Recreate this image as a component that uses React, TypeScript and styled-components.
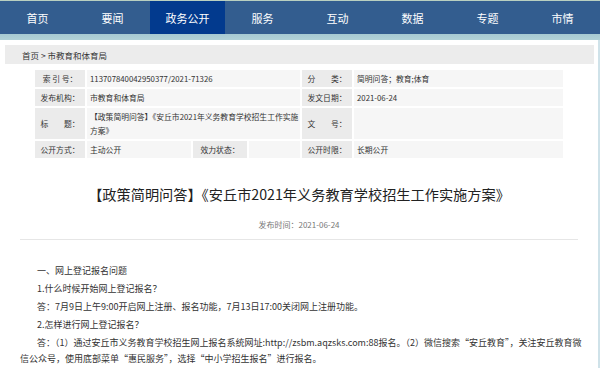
import styled, { createGlobalStyle } from 'styled-components';

const GlobalStyle = createGlobalStyle`
  html, body {
    margin: 0;
    padding: 0;
    background: #cfe2e9;
    font-family: "Noto Sans CJK SC", "Noto Sans", sans-serif;
    color: #333;
  }
`;

const Header = styled.div`
  width: 600px;
  height: 40px;
  background: linear-gradient(#b9cfc0 0, #b9cfc0 1px, transparent 1px, transparent 34px, #a6c9d2 34px, #b2d2d8 40px);
  display: flex;
  flex-direction: column;
`;

const NavBar = styled.nav`
  margin-top: 1px;
  height: 33px;
  display: flex;
  background: #335d8f;
`;

const NavItem = styled.a<{ $active?: boolean }>`
  width: 75px;
  display: flex;
  align-items: center;
  justify-content: center;
  font-size: 11px;
  color: #fff;
  text-decoration: none;
  background: ${({ $active }) => ($active ? '#023a8e' : 'transparent')};
`;

const Page = styled.div`
  width: 598px;
  background: #fff;
  padding: 5px 0 30px;
  box-sizing: border-box;
  min-height: 328px;
`;

const Crumb = styled.div`
  margin: 0 4px 0 5px;
  height: 19px;
  background: #ececec;
  display: flex;
  align-items: center;
  padding-left: 17px;
  font-size: 8.5px;
  color: #333;
`;

const MetaTable = styled.table`
  margin: 4px auto 0;
  border-collapse: separate;
  border-spacing: 2px;
  font-size: 7.8px;
  color: #333;
  table-layout: fixed;
  width: 532px;
`;

const Row = styled.tr<{ $tall?: boolean }>`
  height: ${({ $tall }) => ($tall ? '31px' : '17px')};
`;

const Label = styled.td`
  background: #ebebeb;
  text-align: center;
  padding: 0;
  white-space: nowrap;
`;

const Value = styled.td`
  background: #f6f6f6;
  padding: 1px 0 1px 3px;
  line-height: 14px;
`;

const Title = styled.h1`
  margin: 24px 0 0;
  text-align: center;
  font-size: 14.2px;
  line-height: 20px;
  font-weight: normal;
  color: #222;
`;

const PubTime = styled.div`
  margin-top: 15px;
  text-align: center;
  font-size: 8px;
  line-height: 12px;
  color: #777;
`;

const Divider = styled.hr`
  margin: 8px 20px 0;
  border: none;
  border-top: 1px solid #e6e6e6;
`;

const Body = styled.div`
  padding: 23px 16px 0 20px;
  font-size: 9px;
  line-height: 16px;
  color: #333;
`;

const Para = styled.p`
  margin: 0 0 2px;
  text-indent: 17px;
`;

const navs = ['首页', '要闻', '政务公开', '服务', '互动', '数据', '专题', '市情'];

export default function App() {
  return (
    <>
      <GlobalStyle />
      <Header>
        <NavBar>
          {navs.map((n) => (
            <NavItem key={n} $active={n === '政务公开'}>
              {n}
            </NavItem>
          ))}
        </NavBar>
      </Header>
      <Page>
        <Crumb>首页 &gt; 市教育和体育局</Crumb>
        <MetaTable>
          <colgroup>
            <col style={{ width: 50 }} />
            <col style={{ width: 104 }} />
            <col style={{ width: 54 }} />
            <col style={{ width: 51 }} />
            <col style={{ width: 50 }} />
            <col />
          </colgroup>
          <tbody>
            <Row>
              <Label>索 引 号：</Label>
              <Value colSpan={3}>113707840042950377/2021-71326</Value>
              <Label>分　　类：</Label>
              <Value>简明问答；教育;体育</Value>
            </Row>
            <Row>
              <Label>发布机构：</Label>
              <Value colSpan={3}>市教育和体育局</Value>
              <Label>发文日期：</Label>
              <Value>2021-06-24</Value>
            </Row>
            <Row $tall>
              <Label>标　　题：</Label>
              <Value colSpan={3}>【政策简明问答】《安丘市2021年义务教育学校招生工作实施方案》</Value>
              <Label>文　　号：</Label>
              <Value></Value>
            </Row>
            <Row>
              <Label>公开方式：</Label>
              <Value>主动公开</Value>
              <Label>效力状态：</Label>
              <Value></Value>
              <Label>公开时限：</Label>
              <Value>长期公开</Value>
            </Row>
          </tbody>
        </MetaTable>
        <Title>【政策简明问答】《安丘市2021年义务教育学校招生工作实施方案》</Title>
        <PubTime>发布时间：2021-06-24</PubTime>
        <Divider />
        <Body>
          <Para>一、网上登记报名问题</Para>
          <Para>1.什么时候开始网上登记报名？</Para>
          <Para>答：7月9日上午9:00开启网上注册、报名功能，7月13日17:00关闭网上注册功能。</Para>
          <Para>2.怎样进行网上登记报名？</Para>
          <Para>
            答：（1）通过安丘市义务教育学校招生网上报名系统网址:http://zsbm.aqzsks.com:88报名。（2）微信搜索“安丘教育”，关注安丘教育微信公众号，使用底部菜单“惠民服务”，选择“中小学招生报名”进行报名。
          </Para>
        </Body>
      </Page>
    </>
  );
}
